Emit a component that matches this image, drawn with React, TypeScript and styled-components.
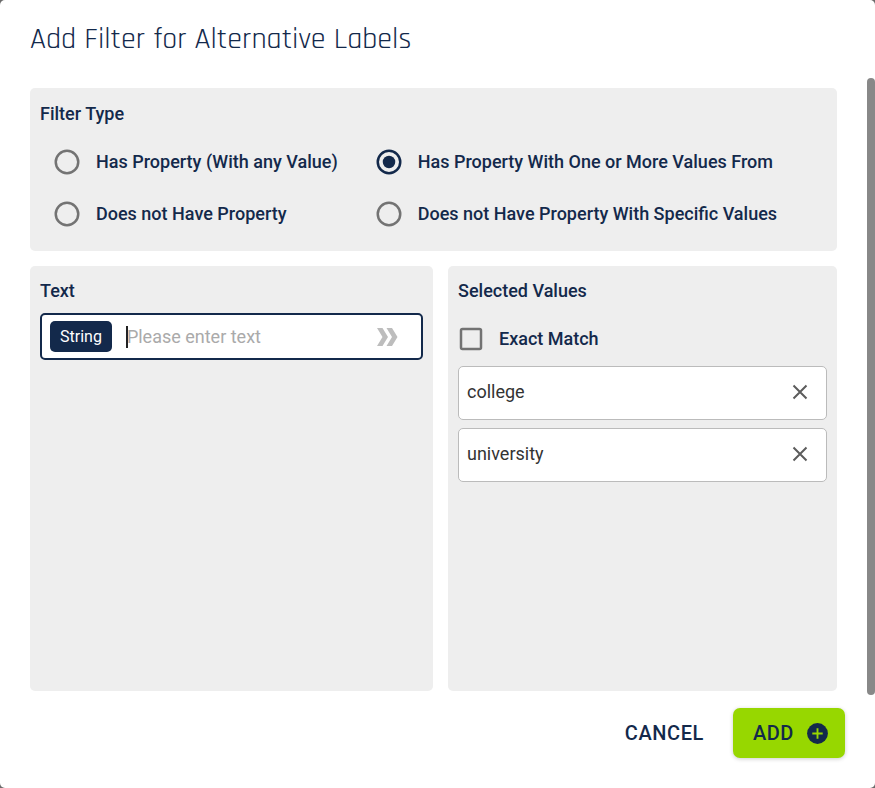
import React, { useState } from "react";
import styled, { createGlobalStyle } from "styled-components";

const navy = "#13294b";
const panelGrey = "#eeeeee";
const iconGrey = "#737373";

const GlobalStyle = createGlobalStyle`
  *, *::before, *::after { box-sizing: border-box; }
  body {
    margin: 0;
    background: #6b6b6b;
    font-family: Roboto, "Liberation Sans", sans-serif;
    font-size: 18px;
    line-height: 24px;
    color: ${navy};
  }
  button, input { font: inherit; color: inherit; }
`;

const Dialog = styled.form`
  display: flex;
  flex-direction: column;
  min-height: 100vh;
  background: #fff;
  border-radius: 5px;
`;

const Title = styled.h1`
  margin: 0;
  padding: 21px 30px 21px;
  font-family: Rajdhani, Roboto, sans-serif;
  font-size: 30px;
  line-height: 36px;
  font-weight: 400;
`;

const Body = styled.div`
  display: flex;
  flex: 1;
`;

const Content = styled.div`
  display: flex;
  flex: 1;
  flex-direction: column;
  gap: 15px;
  min-width: 0;
  padding: 10px 30px 4px;
`;

const ScrollThumb = styled.div`
  width: 8px;
  border-radius: 4px;
  background: #888;
`;

const Panel = styled.section`
  padding: 10px;
  border-radius: 5px;
  background: ${panelGrey};
`;

const FilterPanel = styled(Panel)`
  padding: 11px 10px;
`;

const Columns = styled.div`
  display: grid;
  flex: 1;
  grid-template-columns: 403fr 389fr;
  gap: 15px;
`;

const PanelTitle = styled.h2`
  margin: 0;
  padding: 3px 0 10px;
  font-size: 18px;
  line-height: 24px;
  font-weight: 500;
`;

const RadioGrid = styled.div`
  display: grid;
  grid-template-columns: auto auto;
  justify-content: start;
  column-gap: 36px;
  padding-left: 12px;
`;

const ChoiceLabel = styled.label`
  display: flex;
  align-items: center;
  gap: 14px;
  height: 52px;
  font-weight: 500;
  cursor: pointer;
`;

const ChoiceControl = styled.span`
  position: relative;
  display: flex;
  flex: none;
`;

const NativeChoice = styled.input`
  position: absolute;
  inset: 0;
  width: 100%;
  height: 100%;
  margin: 0;
  opacity: 0;
  cursor: pointer;
`;

const TextField = styled.div`
  display: flex;
  align-items: center;
  height: 47px;
  padding: 0 12px 0 8px;
  border: 2px solid ${navy};
  border-radius: 5px;
  background: #fff;
`;

const TypeChip = styled.button`
  height: 31px;
  margin-right: 14px;
  padding: 0 10px;
  border: 0;
  border-radius: 5px;
  background: ${navy};
  color: #fff;
  font-size: 16px;
  line-height: 30px;
`;

const Caret = styled.span`
  flex: none;
  width: 2px;
  height: 22px;
  margin-right: -1px;
  background: #222;
`;

const TextInput = styled.input`
  flex: 1;
  min-width: 0;
  height: 30px;
  padding: 0;
  border: 0;
  outline: 0;
  background: none;
  &::placeholder {
    color: #aaa;
    opacity: 1;
  }
`;

const IconButton = styled.button`
  display: flex;
  flex: none;
  align-items: center;
  justify-content: center;
  width: 24px;
  height: 24px;
  padding: 0;
  border: 0;
  background: none;
  cursor: pointer;
`;

const MoveButton = styled(IconButton)`
  margin-right: 10px;
`;

const ValueList = styled.ul`
  display: flex;
  flex-direction: column;
  gap: 8px;
  margin: 1px 0 0;
  padding: 0;
  list-style: none;
`;

const ValueItem = styled.li`
  display: flex;
  align-items: center;
  justify-content: space-between;
  height: 54px;
  padding: 0 14px 2px 8px;
  border: 1px solid #bbb;
  border-radius: 5px;
  background: #fff;
  color: #333;
`;

const Actions = styled.footer`
  display: flex;
  justify-content: flex-end;
  gap: 10px;
  padding: 13px 30px 30px;
`;

const ActionButton = styled.button<{ $primary?: boolean }>`
  display: flex;
  align-items: center;
  gap: 11px;
  height: 50px;
  padding: 0 ${(p) => (p.$primary ? 15 : 19)}px 0 20px;
  border: 0;
  border-radius: 7px;
  background: ${(p) => (p.$primary ? "#97d700" : "transparent")};
  box-shadow: ${(p) => (p.$primary ? "0 1px 4px rgba(0, 0, 0, 0.2)" : "none")};
  font-size: 20px;
  font-weight: 500;
  letter-spacing: 0.02857em;
  cursor: pointer;
`;

const RadioIcon = ({ checked }: { checked: boolean }) => (
  <svg width="30" height="30" viewBox="0 0 24 24" aria-hidden="true">
    <circle cx="12" cy="12" r="9" fill="none" stroke={checked ? navy : iconGrey} strokeWidth="2" />
    {checked && <circle cx="12" cy="12" r="5" fill={navy} />}
  </svg>
);

const CheckIcon = ({ checked }: { checked: boolean }) => (
  <svg width="27" height="27" viewBox="0 0 27 27" aria-hidden="true">
    <rect x="3" y="3" width="20" height="20" rx="1.5" fill="none" stroke={checked ? navy : iconGrey} strokeWidth="2.5" />
    {checked && <path d="M7 13l4 4 8-8" fill="none" stroke={navy} strokeWidth="2.5" />}
  </svg>
);

const DoubleChevron = () => (
  <svg width="22" height="20" viewBox="0 0 22 20" aria-hidden="true" fill="#bdbdbd">
    <path d="M1 1h5.500l5.500 9-5.500 9H1l5.500-9z" />
    <path d="M10.500 1H16l5.500 9-5.500 9h-5.500l5.500-9z" />
  </svg>
);

const CloseIcon = () => (
  <svg width="16" height="16" viewBox="0 0 16 16" aria-hidden="true">
    <path d="M1.500 1.500l13 13M14.500 1.500l-13 13" stroke="#5c5c5c" strokeWidth="2" />
  </svg>
);

const AddIcon = () => (
  <svg width="25" height="25" viewBox="0 0 24 24" aria-hidden="true">
    <circle cx="12" cy="12" r="10" fill={navy} />
    <path d="M12 7v10M7 12h10" stroke="#97d700" strokeWidth="1.800" />
  </svg>
);

const filterTypes = [
  "Has Property (With any Value)",
  "Has Property With One or More Values From",
  "Does not Have Property",
  "Does not Have Property With Specific Values",
];

export default function App() {
  const [type, setType] = useState(1);
  const [exact, setExact] = useState(false);
  const [text, setText] = useState("");
  const [values, setValues] = useState(["college", "university"]);

  const addText = () => {
    const value = text.trim();
    if (value) setValues([...values, value]);
    setText("");
  };

  return (
    <>
      <GlobalStyle />
      <Dialog onSubmit={(e) => e.preventDefault()}>
        <Title>Add Filter for Alternative Labels</Title>
        <Body>
          <Content>
            <FilterPanel role="radiogroup" aria-labelledby="filter-type">
              <PanelTitle id="filter-type">Filter Type</PanelTitle>
              <RadioGrid>
                {filterTypes.map((label, i) => (
                  <ChoiceLabel key={label}>
                    <ChoiceControl>
                      <RadioIcon checked={type === i} />
                      <NativeChoice type="radio" name="filterType" checked={type === i} onChange={() => setType(i)} />
                    </ChoiceControl>
                    {label}
                  </ChoiceLabel>
                ))}
              </RadioGrid>
            </FilterPanel>
            <Columns>
              <Panel>
                <PanelTitle id="text-title">Text</PanelTitle>
                <TextField>
                  <TypeChip type="button">String</TypeChip>
                  {!text && <Caret />}
                  <TextInput
                    type="text"
                    aria-labelledby="text-title"
                    placeholder="Please enter text"
                    value={text}
                    onChange={(e) => setText(e.target.value)}
                  />
                  <MoveButton type="button" aria-label="Add to selected values" onClick={addText}>
                    <DoubleChevron />
                  </MoveButton>
                </TextField>
              </Panel>
              <Panel>
                <PanelTitle>Selected Values</PanelTitle>
                <ChoiceLabel>
                  <ChoiceControl>
                    <CheckIcon checked={exact} />
                    <NativeChoice type="checkbox" checked={exact} onChange={(e) => setExact(e.target.checked)} />
                  </ChoiceControl>
                  Exact Match
                </ChoiceLabel>
                <ValueList>
                  {values.map((value) => (
                    <ValueItem key={value}>
                      <span>{value}</span>
                      <IconButton
                        type="button"
                        aria-label={`Remove ${value}`}
                        onClick={() => setValues(values.filter((v) => v !== value))}
                      >
                        <CloseIcon />
                      </IconButton>
                    </ValueItem>
                  ))}
                </ValueList>
              </Panel>
            </Columns>
          </Content>
          <ScrollThumb aria-hidden="true" />
        </Body>
        <Actions>
          <ActionButton type="button">CANCEL</ActionButton>
          <ActionButton type="submit" $primary>
            ADD
            <AddIcon />
          </ActionButton>
        </Actions>
      </Dialog>
    </>
  );
}
